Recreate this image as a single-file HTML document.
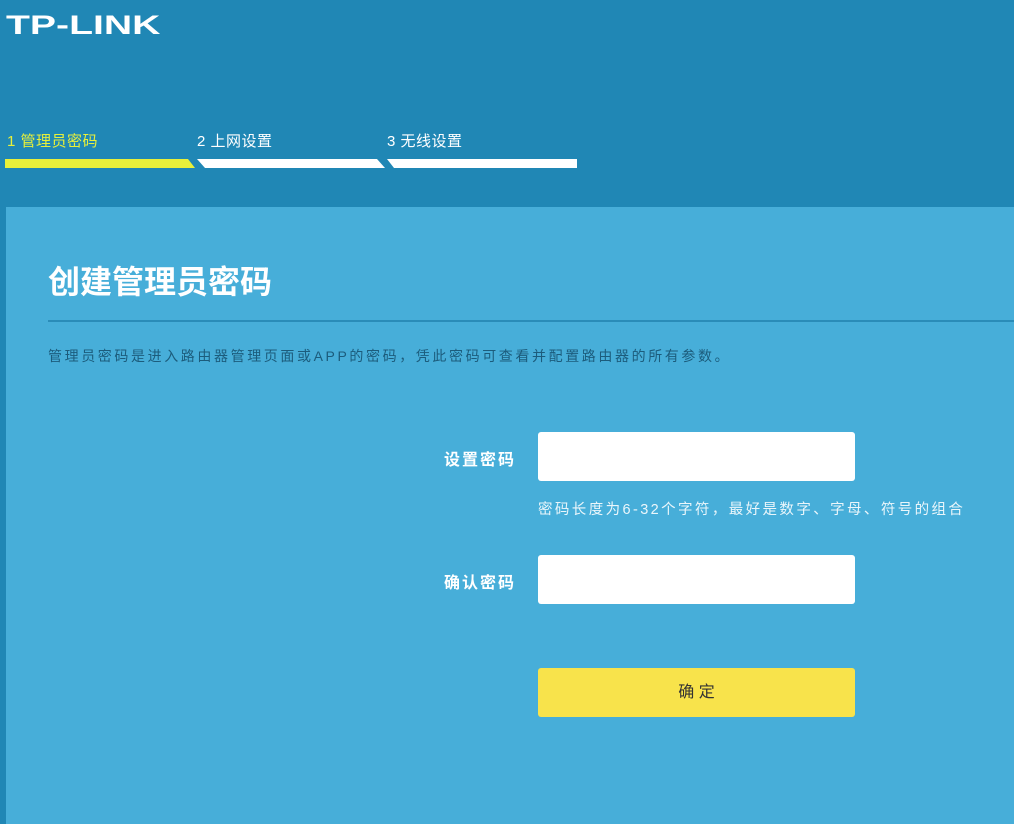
<!DOCTYPE html>
<html><head><meta charset="utf-8"><style>
body{margin:0;width:1014px;height:824px;background:#2087b5;font-family:"Liberation Sans","Noto Sans CJK SC",sans-serif;position:relative;overflow:hidden}
.a{position:absolute}
.logo{left:6px;top:10px;color:#fff;font-weight:bold;font-size:27px;line-height:30px;letter-spacing:0px;transform:scaleX(1.45);transform-origin:left}
.step{top:130px;font-size:15px;color:#fff}
.panel{left:6px;top:207px;width:1008px;height:617px;background:#47aed9}
.in{background:#fff;border-radius:3px;width:317px;height:49px;left:538px}
.lbl{color:#fff;font-weight:bold;font-size:16px;letter-spacing:2px;width:120px;text-align:right;left:396px}
</style></head><body>
<div class="a logo">TP-LINK</div>
<div class="a step" style="left:7px;color:#e8f03a;letter-spacing:0.5px">1 管理员密码</div>
<div class="a step" style="left:197px;letter-spacing:0.5px">2 上网设置</div>
<div class="a step" style="left:387px;letter-spacing:0.5px">3 无线设置</div>
<svg class="a" style="left:0;top:158px" width="600" height="12">
<polygon points="5,1 188,1 195,10 5,10" fill="#e8f03a"/>
<polygon points="197,1 377,1 385,10 205,10" fill="#fff"/>
<polygon points="387,1 577,1 577,10 394,10" fill="#fff"/>
</svg>
<div class="a panel"></div>
<div class="a" style="left:48px;top:257px;color:#fff;font-weight:bold;font-size:32px">创建管理员密码</div>
<div class="a" style="left:48px;top:320px;width:966px;height:2px;background:#2a8cb8"></div>
<div class="a" style="left:48px;top:346px;color:#1c5c7c;font-size:14px;letter-spacing:2.6px">管理员密码是进入路由器管理页面或APP的密码，凭此密码可查看并配置路由器的所有参数。</div>
<div class="a lbl" style="top:446px">设置密码</div>
<div class="a in" style="top:432px"></div>
<div class="a" style="left:538px;top:498px;color:#eaf6fb;font-size:14.5px;letter-spacing:2.4px">密码长度为6-32个字符，最好是数字、字母、符号的组合</div>
<div class="a lbl" style="top:569px">确认密码</div>
<div class="a in" style="top:555px"></div>
<div class="a" style="left:538px;top:668px;width:317px;height:49px;background:#f8e34b;border-radius:3px;text-align:center;line-height:49px;font-size:16px;color:#333">确 定</div>
</body></html>
